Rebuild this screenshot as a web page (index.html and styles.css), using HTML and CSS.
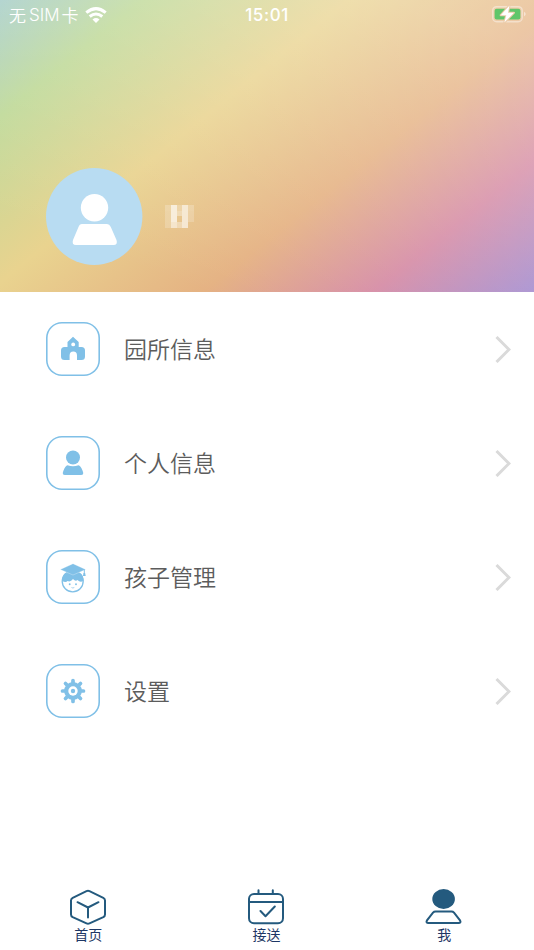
FILE: index.html
```html
<!DOCTYPE html>
<html lang="zh-CN">
<head>
<meta charset="utf-8">
<title>我</title>
<link rel="stylesheet" href="styles.css">
</head>
<body>
<div class="app">
  <header class="hero">
    <div class="status">
      <div class="carrier"><span>无</span><span class="sim">SIM</span><span>卡</span>
        <svg class="wifi" width="22" height="16" viewBox="0 0 22 16"><g fill="none" stroke="#fff" stroke-width="3.100"><path d="M1.300 5.600Q11-2.200 20.700 5.600"/><path d="M4.700 9.500Q11 4.500 17.300 9.500"/></g><path d="M7.500 12.500Q11 9.700 14.500 12.500L11 15.900Z" fill="#fff"/></svg>
      </div>
      <time class="clock">15:01</time>
      <svg class="battery" width="36" height="20" viewBox="0 0 36 20"><rect x="1.700" y="2.700" width="29.500" height="15" rx="4" fill="none" stroke="#fff" stroke-opacity=".42" stroke-width="1.500"/><path d="M33 7.800q1.700.8 1.700 2.300T33 12.500z" fill="#fff" fill-opacity=".5"/><rect x="3.600" y="4.800" width="25.800" height="10.800" rx="2" fill="#60c66a"/><path d="M18.500 1.500L9.700 11.200h5.600L13.300 18.500L23 8.800h-6Z" fill="#fff" stroke="#ebcba8" stroke-width="2" paint-order="stroke" stroke-linejoin="round"/></svg>
    </div>
    <div class="profile">
      <svg class="avatar" width="97" height="97" viewBox="0 0 97 97"><ellipse cx="48.200" cy="48.500" rx="48.200" ry="48.500" fill="#b8dcf2"/><circle cx="48.500" cy="39.700" r="13.700" fill="#fff"/><path d="M36 56H61Q63.500 56 64.800 59L70.500 72Q72 77 67.500 77H30Q25.500 77 27 72L32.500 59Q33.500 56 36 56Z" fill="#fff"/></svg>
      <svg class="name" width="30" height="24" viewBox="0 0 30 24" fill="#fff" shape-rendering="crispEdges"><path d="M0 0h6v6H0zM12 0h5v6h-5zM23 0h6v6h-6z" opacity=".22"/><path d="M0 6h6v17H0zM23 6h6v11h-6z" opacity=".2"/><path d="M6 0h6v17H6z" opacity=".68"/><path d="M6 17h6v6H6z" opacity=".55"/><path d="M12 6h5v5h-5zM12 17h5v6h-5z" opacity=".35"/><path d="M17 0h6v23h-6z" opacity=".6"/></svg>
    </div>
  </header>
  <main class="menu">
    <a class="row"><span class="tile"><svg width="26" height="26" viewBox="0 0 26 26"><path d="M13 .8L18.700 6V11H21.500Q25 11 25 14.500V20.500Q25 24 21.500 24H17V19.500Q17 15.500 13.300 15.500T9.600 19.500V24H4.500Q1 24 1 20.500V14.500Q1 11 4.500 11H7.500V6Z" fill="#80c0e7"/><circle cx="13.200" cy="8.400" r="1.900" fill="#fff"/></svg></span><span class="label">园所信息</span><svg class="chevron" width="16" height="28" viewBox="0 0 16 28"><path d="M1.500 2L14 14.500L1.500 27"/></svg></a>
    <a class="row"><span class="tile"><svg width="26" height="26" viewBox="0 0 26 26" fill="#80c0e7"><circle cx="13" cy="7.500" r="7"/><path d="M7.500 15.200Q13 17.500 18.500 15.200Q20.500 15.500 22.500 20.500Q24.500 25 21 25H5Q1.500 25 3.500 20.500Q5.500 15.500 7.500 15.200Z"/></svg></span><span class="label">个人信息</span><svg class="chevron" width="16" height="28" viewBox="0 0 16 28"><path d="M1.500 2L14 14.500L1.500 27"/></svg></a>
    <a class="row"><span class="tile"><svg class="child" width="26" height="30" viewBox="0 0 26 30"><circle cx="12.700" cy="18.300" r="10.500" fill="#fff" stroke="#80c0e7" stroke-width="1.300"/><path d="M2 18Q2.500 12 5 10.500L13 9L21 10.500Q23.500 13 23.500 18Q20 20 17.500 17Q15.500 19 13 16Q10.500 19.500 7.500 18Q6 20 2 18Z" fill="#80c0e7"/><path d="M.3 6.500L13 .7L25.700 6.500L13 12Z" fill="#80c0e7" stroke="#fff" stroke-width=".3"/><path d="M24.300 6.500V11" stroke="#80c0e7"/><path d="M23.500 10h1.600l.6 3h-2.800z" fill="#80c0e7"/><g fill="#80c0e7"><circle cx="9.700" cy="21.300" r=".95"/><circle cx="16" cy="21.300" r=".95"/></g><path d="M11.500 24.500q1.400 1 2.800 0" fill="none" stroke="#80c0e7" stroke-width=".7"/></svg></span><span class="label">孩子管理</span><svg class="chevron" width="16" height="28" viewBox="0 0 16 28"><path d="M1.500 2L14 14.500L1.500 27"/></svg></a>
    <a class="row"><span class="tile"><svg width="26" height="26" viewBox="0 0 26 26"><g stroke="#80c0e7" stroke-width="3.700" stroke-linecap="round"><path d="M13 2.500V23.500M2.500 13H23.500M5.500 5.500L20.500 20.500M20.500 5.500L5.500 20.500"/></g><circle cx="13" cy="13" r="8.900" fill="#80c0e7"/><circle cx="13" cy="13" r="4.700" fill="#fff"/><circle cx="13" cy="13" r="2.200" fill="#80c0e7"/></svg></span><span class="label">设置</span><svg class="chevron" width="16" height="28" viewBox="0 0 16 28"><path d="M1.500 2L14 14.500L1.500 27"/></svg></a>
  </main>
  <nav class="tabs">
    <a class="tab"><svg width="38" height="38" viewBox="0 0 38 38" fill="none" stroke="#245a7e" stroke-width="2" stroke-linejoin="round" stroke-linecap="round"><path d="M17.500 2.200Q19 1.500 20.500 2.200L34.300 8.800Q36 9.700 36 11.500V25.500Q36 27.300 34.300 28.200L20.500 34.300Q19 35 17.500 34.300L3.700 28.200Q2 27.300 2 25.500V11.500Q2 9.700 3.700 8.800Z"/><path d="M8.500 13.200L19 18.500L29.500 13.200M19 18.500V28.500"/></svg><span>首页</span></a>
    <a class="tab"><svg width="38" height="38" viewBox="0 0 38 38" fill="none" stroke="#245a7e" stroke-width="2" stroke-linecap="round" stroke-linejoin="round"><rect x="2" y="5" width="34" height="29.300" rx="5"/><path d="M2 13H36M11.500 1.300V4.500M25.800 1.300V4.500M13.500 22L18.500 27.200L27.800 17.500"/></svg><span>接送</span></a>
    <a class="tab"><svg width="38" height="38" viewBox="0 0 38 38"><ellipse cx="18.600" cy="10" rx="11.300" ry="9.900" fill="#245a7e"/><path d="M10.500 22.500H26.500Q28 22.500 29 23.600L35 31.300Q36.500 34 33.500 34H3.500Q.5 34 2 31.300L8 23.600Q9 22.500 10.500 22.500Z" fill="none" stroke="#245a7e" stroke-width="2"/></svg><span>我</span></a>
  </nav>
</div>
</body>
</html>
```
FILE: styles.css
```css
* { box-sizing: border-box; }
body { margin: 0; background: #fff; font-family: "Noto Sans CJK SC", sans-serif; }
.app { width: 534px; height: 950px; display: flex; flex-direction: column; overflow: hidden; }
.hero {
  height: 292px;
  flex: none;
  background:
    linear-gradient(200deg, rgba(255,255,255,.28) 10%, rgba(255,255,255,0) 85%),
    linear-gradient(141deg, #a5cdc8 0%, #bfd998 16%, #e9d38f 39%, #e5b283 63%, #d68da6 82%, #a68fd0 100%);
}
.status { height: 30px; display: grid; grid-template-columns: 1fr auto 1fr; align-items: center; color: #fff; padding: 0 8px 0 9px; }
.carrier { display: flex; align-items: center; font-size: 17px; line-height: 30px; font-weight: 350; }
.sim { font-family: Inter, sans-serif; font-size: 17px; font-weight: 300; margin: 0 2px 0 3px; }
.wifi { margin-left: 6px; }
.clock { font: 500 17px/30px Inter, sans-serif; letter-spacing: .6px; margin-left: -1px; }
.battery { justify-self: end; margin: -2px -1px 0 0; }
.profile { display: flex; align-items: center; margin: 138px 0 0 46px; height: 97px; }
.name { margin-left: 22px; }
.menu { flex: 1; }
.row { height: 114px; display: flex; align-items: center; padding: 0 23px 0 46px; }
.tile { width: 54px; height: 54px; box-shadow: inset 0 0 0 1.6px #80c0e7; border-radius: 16px; display: flex; align-items: center; justify-content: center; }
.child { margin-top: 2px; }
.label { margin: -3px 0 0 24px; font-size: 23px; line-height: 34px; font-weight: 350; color: #5c5c5c; }
.chevron { margin-left: auto; fill: none; stroke: #dadada; stroke-width: 3; }
.tabs { height: 64px; flex: none; display: grid; grid-template-columns: repeat(3, 1fr); margin-left: -1px; }
.tab { display: flex; flex-direction: column; align-items: center; padding-top: 3px; font-size: 14px; line-height: 20px; color: #1e3765; }
.tab span { margin-top: -3px; }
.tab:last-child { margin-left: -1px; }
```
